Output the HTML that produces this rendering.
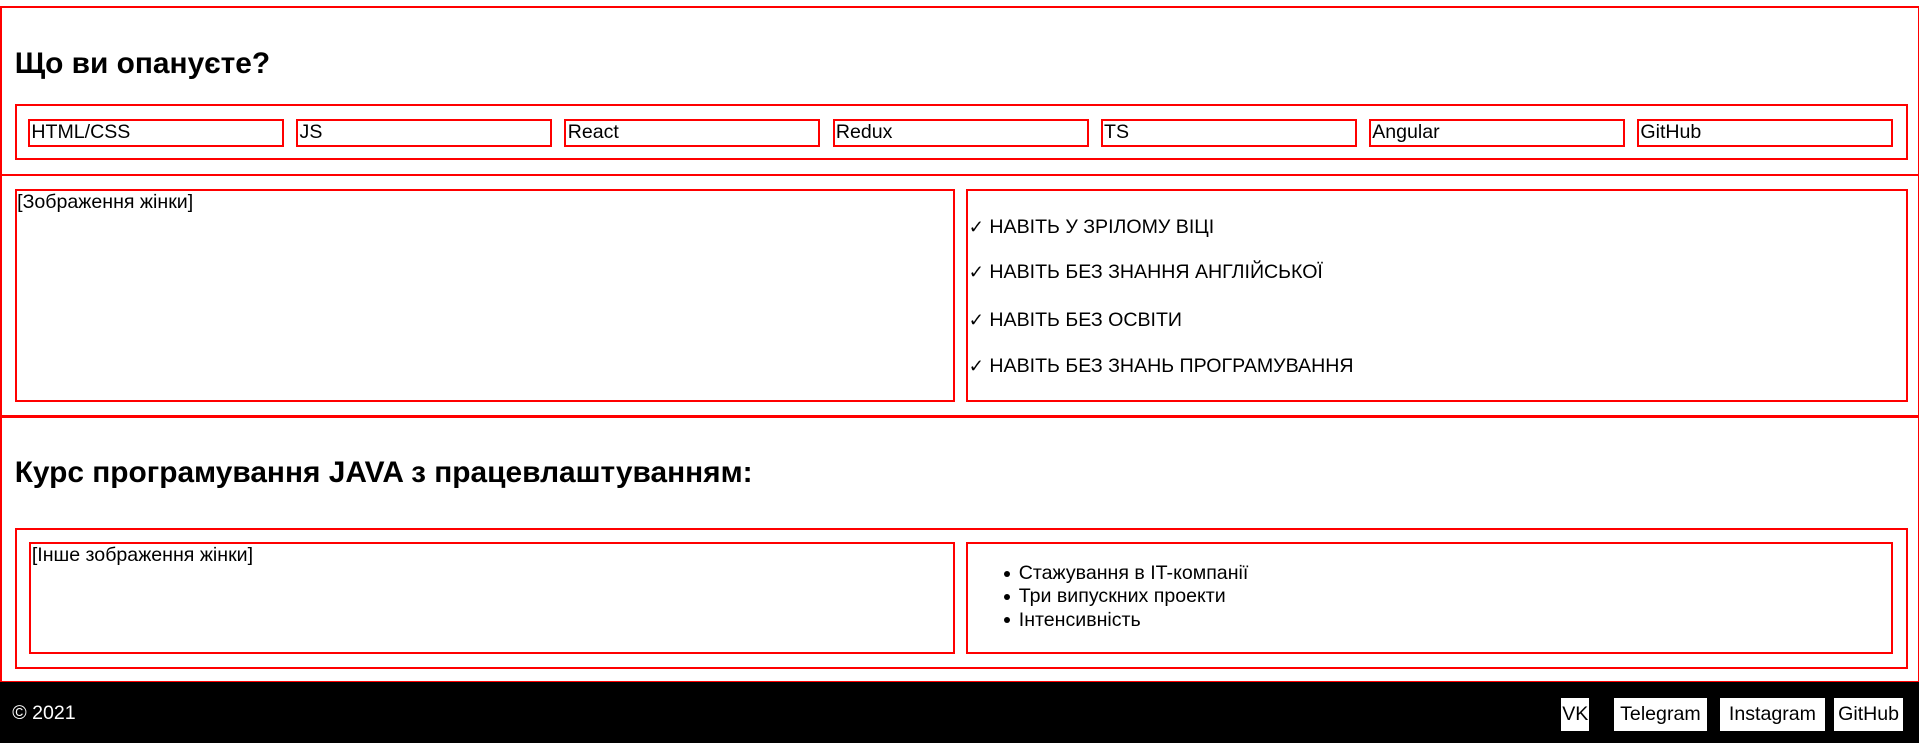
<!DOCTYPE html>
<html><head><meta charset="utf-8"><style>
html,body{margin:0;padding:0;background:#fff;width:1919px;height:749px;overflow:hidden}
#w{zoom:1.2245;position:relative;width:1568px;height:612px;font-family:"Liberation Sans",Arial,sans-serif;font-size:16px;color:#000}
.b{position:absolute;border:2px solid red;box-sizing:border-box}
.t{position:absolute;white-space:nowrap}
h2{position:absolute;margin:0;font-size:24.4px;font-weight:bold;white-space:nowrap}
.it{position:absolute;top:97px;height:23px;width:209px;border:2px solid red;box-sizing:border-box;line-height:18px;padding-left:1px}
.ck{position:absolute;left:791px}
.ck b{font-family:"DejaVu Sans",sans-serif;font-weight:bold;font-size:15px}
.ft{position:absolute;top:557px;left:0;width:1568px;height:50px;background:#000}
.btn{position:absolute;top:13px;height:27px;background:#fff;color:#000;line-height:27px;text-align:center;white-space:nowrap}
.li{position:absolute;left:832px;white-space:nowrap}
.li:before{content:"";position:absolute;left:-12px;top:7px;width:5px;height:5px;border-radius:50%;background:#000}
</style></head><body><div id="w">
<div class="b" style="left:0;top:5px;width:1568px;height:139px"></div>
<h2 style="left:12px;top:38px">Що ви опануєте?</h2>
<div class="b" style="left:12px;top:85px;width:1546px;height:46px"></div>
<div class="it" style="left:23px">HTML/CSS</div>
<div class="it" style="left:242px">JS</div>
<div class="it" style="left:461px">React</div>
<div class="it" style="left:680px">Redux</div>
<div class="it" style="left:899px">TS</div>
<div class="it" style="left:1118px">Angular</div>
<div class="it" style="left:1337px">GitHub</div>

<div class="b" style="left:0;top:142px;width:1568px;height:199px"></div>
<div class="b" style="left:12px;top:154px;width:768px;height:174px"></div>
<div class="t" style="left:14px;top:156px">[Зображення жінки]</div>
<div class="b" style="left:789px;top:154px;width:769px;height:174px"></div>
<div class="t ck" style="top:176px"><b>✓</b> НАВІТЬ У ЗРІЛОМУ ВІЦІ</div>
<div class="t ck" style="top:213px"><b>✓</b> НАВІТЬ БЕЗ ЗНАННЯ АНГЛІЙСЬКОЇ</div>
<div class="t ck" style="top:252px"><b>✓</b> НАВІТЬ БЕЗ ОСВІТИ</div>
<div class="t ck" style="top:290px"><b>✓</b> НАВІТЬ БЕЗ ЗНАНЬ ПРОГРАМУВАННЯ</div>

<div class="b" style="left:0;top:339px;width:1568px;height:219px"></div>
<h2 style="left:12px;top:372px">Курс програмування JAVA з працевлаштуванням:</h2>
<div class="b" style="left:12px;top:431px;width:1546px;height:115px"></div>
<div class="b" style="left:24px;top:443px;width:756px;height:91px"></div>
<div class="t" style="left:26px;top:444px">[Інше зображення жінки]</div>
<div class="b" style="left:789px;top:443px;width:757px;height:91px"></div>
<div class="li" style="top:459px">Стажування в IT-компанії</div>
<div class="li" style="top:478px">Три випускних проекти</div>
<div class="li" style="top:497px">Інтенсивність</div>

<div class="ft">
<div class="t" style="left:10px;top:16px;color:#fff">© 2021</div>
<div class="btn" style="left:1275px;width:23px">VK</div>
<div class="btn" style="left:1318px;width:76px">Telegram</div>
<div class="btn" style="left:1405px;width:85px">Instagram</div>
<div class="btn" style="left:1498px;width:56px">GitHub</div>
</div>
</div></body></html>
